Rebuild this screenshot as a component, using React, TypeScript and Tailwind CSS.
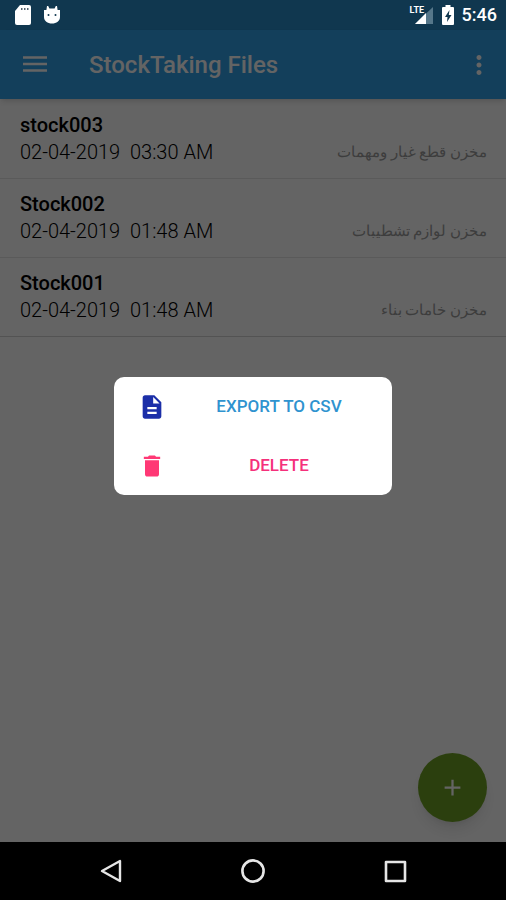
import { useState } from 'react';
import { MdDelete, MdMoreVert, MdAdd } from 'react-icons/md';

type StockFile = {
  name: string;
  date: string;
  time: string;
  warehouse: string;
};

const files: StockFile[] = [
  { name: 'stock003', date: '02-04-2019', time: '03:30 AM', warehouse: 'مخزن قطع غيار ومهمات' },
  { name: 'Stock002', date: '02-04-2019', time: '01:48 AM', warehouse: 'مخزن لوازم تشطيبات' },
  { name: 'Stock001', date: '02-04-2019', time: '01:48 AM', warehouse: 'مخزن خامات بناء' },
];

function StatusBar() {
  return (
    <div className="flex h-[30px] shrink-0 items-center justify-between bg-[#10374f] pl-[14px] pr-[9px] text-white">
      <div className="flex items-center gap-3">
        <svg className="h-5 w-[17px]" viewBox="0 0 17 20" fill="currentColor">
          <path d="M6 0h9a2 2 0 0 1 2 2v16a2 2 0 0 1-2 2H3a2 2 0 0 1-2-2V6z" />
          <path d="M7 3h1.500v2H7zM10 3h1.500v2H10zM13 3h1.500v2H13z" fill="#56656f" />
        </svg>
        <svg className="h-5 w-[18px]" viewBox="0 0 18 20" fill="currentColor">
          <path d="M4 1h1.200l1.200 2.500h5.200L12.800 1H14l.6 4H17v7c0 4-3.500 6.500-8 6.500S1 16 1 12V5h2.400z" />
          <circle cx="5.500" cy="10" r="1" fill="#10374f" />
          <circle cx="12.500" cy="10" r="1" fill="#10374f" />
        </svg>
      </div>
      <div className="flex items-center">
        <div className="relative h-5 w-6">
          <svg className="h-5 w-6" viewBox="0 0 24 20">
            <path d="M23 2v17H5z" fill="#56778a" />
            <path d="M16 8v11H5z" fill="#fff" />
          </svg>
          <span className="absolute left-0 top-0 bg-[#10374f] text-[9px] font-bold leading-[10px]">LTE</span>
        </div>
        <svg className="ml-2 h-5 w-3" viewBox="0 0 12 20">
          <path d="M3.500 0h5v2H11a1 1 0 0 1 1 1v16a1 1 0 0 1-1 1H1a1 1 0 0 1-1-1V3a1 1 0 0 1 1-1h2.500z" fill="#fff" />
          <path d="M7.500 5L3 12h2.500L5 17l4.500-7H6.800z" fill="#10374f" />
        </svg>
        <span className="ml-2 text-lg font-medium leading-5">5:46</span>
      </div>
    </div>
  );
}

function NavBar() {
  return (
    <nav className="flex h-[58px] shrink-0 items-center justify-center gap-[118px] bg-black text-[#e6e6e6]">
      <button aria-label="Back">
        <svg className="size-6" viewBox="0 0 24 24" fill="none" stroke="currentColor" strokeWidth="2.400" strokeLinejoin="round">
          <path d="M21 2v20L3 12z" />
        </svg>
      </button>
      <button aria-label="Home">
        <svg className="size-6" viewBox="0 0 24 24" fill="none" stroke="currentColor" strokeWidth="2.600">
          <circle cx="12" cy="12" r="10.600" />
        </svg>
      </button>
      <button aria-label="Recent apps">
        <svg className="size-6" viewBox="0 0 24 24" fill="none" stroke="currentColor" strokeWidth="2.600" strokeLinejoin="round">
          <path d="M3 3h19v19H3z" />
        </svg>
      </button>
    </nav>
  );
}

export default function App() {
  const [menuOpen, setMenuOpen] = useState(true);

  return (
    <div className="flex min-h-screen flex-col bg-[#fafafa] font-[Roboto,'Noto_Sans',sans-serif]">
      <StatusBar />

      <div className="relative flex flex-1 flex-col">
        <header className="flex h-[69px] shrink-0 items-center bg-[#309de3] pl-[23px] pr-3 text-[#fafafa] shadow-md">
          <button aria-label="Open menu">
            <svg className="size-6" viewBox="0 0 24 24" fill="none" stroke="currentColor" strokeWidth="2.600">
              <path d="M0 4.500h24M0 11h24M0 17.500h24" />
            </svg>
          </button>
          <h1 className="ml-[42px] flex-1 text-2xl font-medium">StockTaking Files</h1>
          <button aria-label="More options">
            <MdMoreVert className="size-[30px]" />
          </button>
        </header>

        <ul className="pt-px">
          {files.map((file) => (
            <li key={file.name} className="flex h-[79px] items-end justify-between border-b border-[#e2e2e2] pb-3 pl-5 pr-[19px] last:border-[#cfcfcf]">
              <div className="text-xl leading-[27px]">
                <h2 className="font-medium text-black">{file.name}</h2>
                <p className="whitespace-pre font-light text-black">{file.date}  {file.time}</p>
              </div>
              <p dir="rtl" lang="ar" className="text-[15px] leading-[27px] text-[#999]">{file.warehouse}</p>
            </li>
          ))}
        </ul>

        <button
          aria-label="Add file"
          onClick={() => setMenuOpen(true)}
          className="absolute bottom-5 right-[19px] flex size-[69px] items-center justify-center rounded-full bg-[#6d9e24] text-[#fafafa] shadow-lg"
        >
          <MdAdd className="size-[27px]" />
        </button>

        {menuOpen && (
          <div className="absolute inset-0 flex items-center justify-center bg-black/60" onClick={() => setMenuOpen(false)}>
            <div role="dialog" aria-label="File actions" className="flex w-[55%] flex-col rounded-[10px] bg-white text-[17px] font-medium">
              <button className="flex h-[59px] items-center pl-6 text-[#2f93cf]">
                <svg className="size-7 text-[#1c2fa8]" viewBox="0 0 24 24" fill="currentColor">
                  <path d="M14 2H6c-1.100 0-2 .9-2 2v16c0 1.100.9 2 2 2h12c1.100 0 2-.9 2-2V8l-6-6zm2 16H8v-2h8v2zm0-4H8v-2h8v2zm-3-5V3.500L18.500 9H13z" />
                </svg>
                <span className="flex-1 text-center">EXPORT TO CSV</span>
              </button>
              <button className="flex h-[59px] items-center pl-6 text-[#f5307b]">
                <MdDelete className="size-7 text-[#ff3875]" />
                <span className="flex-1 text-center">DELETE</span>
              </button>
            </div>
          </div>
        )}
      </div>

      <NavBar />
    </div>
  );
}
